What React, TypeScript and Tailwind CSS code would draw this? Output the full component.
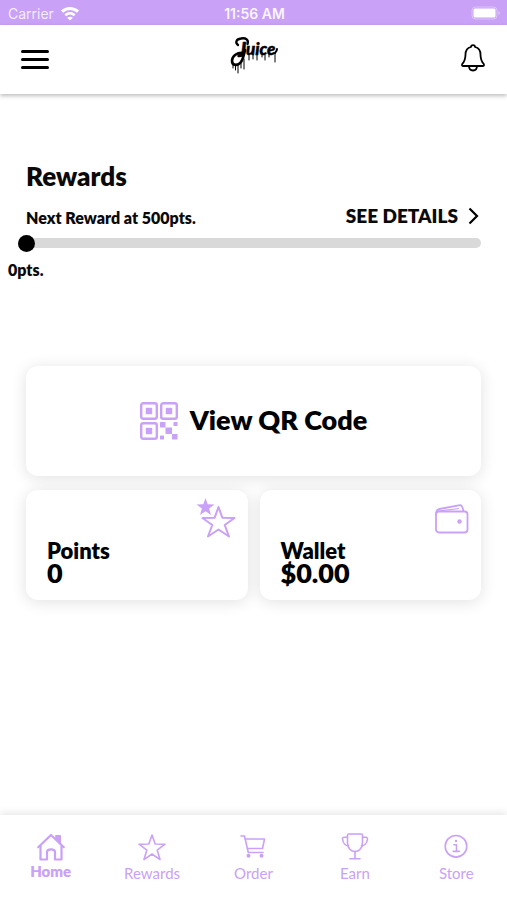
import { useState, type ReactNode } from "react";

const STAR =
  "M14 2 L17.2 11 L27 11.2 L19.2 17.1 L22 26.6 L14 21 L6 26.6 L8.8 17.1 L1 11.2 L10.8 11 Z";

function WifiIcon() {
  return (
    <svg width="20" height="16" viewBox="0 0 20 16" fill="none" stroke="white" strokeWidth="3" aria-hidden="true">
      <path d="M2 5.6 C6.500 1.300 13.500 1.300 18 5.600" />
      <path d="M5.300 9.300 C8 6.700 12 6.700 14.700 9.300" strokeWidth="2.600" />
      <path d="M10 14.500 L7.200 11.800 C8.800 10.300 11.200 10.300 12.800 11.800 Z" fill="white" stroke="none" />
    </svg>
  );
}

function BatteryIcon() {
  return (
    <svg width="30" height="16" viewBox="0 0 30 16" aria-hidden="true">
      <rect x="1" y="2" width="25" height="12" rx="3.500" fill="none" stroke="white" strokeOpacity="0.4" />
      <rect x="2.500" y="3.500" width="22" height="9" rx="1.500" fill="white" />
      <path d="M27.500 6 C29.300 7 29.300 9 27.500 10 Z" fill="white" fillOpacity="0.5" />
    </svg>
  );
}

function JuiceLogo() {
  return (
    <svg width="50" height="42" viewBox="0 0 50 42" role="img" aria-label="Juice" stroke="black" strokeLinecap="round" fill="none">
      <g fill="black" strokeWidth="0.5" fontStyle="italic" fontWeight="900" fontFamily="Lato, sans-serif">
        <text x="9" y="22" fontSize="20">J</text>
        <text x="17" y="20" fontSize="17">uice</text>
      </g>
      <path d="M9 10 C6 8 7 4 12 3.500 C17 2.500 20 5 18.500 9" strokeWidth="2.300" />
      <path d="M15 18 C8 17 3 21 3 26 C3 31 9 31 12 27 C14 24 15 20 16 15" strokeWidth="2.600" />
      <path d="M46 18 C47 17 48 16 48 14" strokeWidth="2" />
      <path d="M4 28 V33 M6.500 30 V35 M9 30 V38 M12 28 V33 M15 24 V34 M20 20 V25 M24 20 V24 M28 20 V25 M33 20 V22 M36 20 V25 M40 19 V22 M46 18 V27" strokeWidth="1" />
    </svg>
  );
}

function BellIcon() {
  return (
    <svg width="26" height="30" viewBox="0 0 26 30" fill="none" stroke="black" strokeWidth="1.800" strokeLinejoin="round" aria-hidden="true">
      <path d="M11 4 C11 1.400 15 1.400 15 4 C19 5 20.500 8 20.500 11.500 C20.500 16.500 21.500 18.500 23.800 21 Q24.500 23 23 23 H3 Q1.500 23 2.200 21 C4.500 18.500 5.500 16.500 5.500 11.500 C5.500 8 7 5 11 4 Z" />
      <path d="M9 23 C9 29 17 29 17 23" />
    </svg>
  );
}

function QrIcon() {
  return (
    <svg width="38" height="38" viewBox="0 0 38 38" fill="#c9a1f7" aria-hidden="true">
      <g fill="none" stroke="#c9a1f7" strokeWidth="2.400">
        <rect x="1.200" y="1.200" width="15.600" height="15.600" rx="2" />
        <rect x="21.200" y="1.200" width="15.600" height="15.600" rx="2" />
        <rect x="1.200" y="21.200" width="15.600" height="15.600" rx="2" />
      </g>
      <rect x="5.800" y="5.800" width="6.400" height="6.400" />
      <rect x="25.800" y="5.800" width="6.400" height="6.400" />
      <rect x="5.800" y="25.800" width="6.400" height="6.400" />
      <rect x="20" y="20" width="5.500" height="5.500" rx="0.500" />
      <rect x="25.500" y="25.500" width="6.500" height="6.500" rx="0.500" />
      <rect x="32" y="32" width="5.500" height="5.500" rx="0.500" />
      <rect x="33.500" y="20" width="4" height="4" rx="0.500" />
      <rect x="20" y="33.500" width="4" height="4" rx="0.500" />
    </svg>
  );
}

function PointsIcon() {
  return (
    <svg width="40" height="42" viewBox="0 0 40 42" fill="none" stroke="#c9a1f7" strokeWidth="2" strokeLinejoin="round" aria-hidden="true">
      <path d="M22.500 9 L26.300 19.700 L38.500 20 L28.700 27 L33 38.500 L22.500 31.500 L12 38.500 L16.300 27 L6.500 20 L18.700 19.700 Z" />
      <path d="M9.500 0 L11.700 6.300 L18.500 6.500 L13.100 10.500 L15 17 L9.500 13.300 L4 17 L5.900 10.500 L0.500 6.500 L7.300 6.300 Z" fill="#c9a1f7" stroke="none" />
    </svg>
  );
}

function WalletIcon() {
  return (
    <svg width="34" height="30" viewBox="0 0 34 30" fill="none" stroke="#c9a1f7" strokeWidth="1.800" strokeLinejoin="round" aria-hidden="true">
      <rect x="1" y="7.500" width="31.500" height="21" rx="3" />
      <path d="M1 10.500 C1 7 2 5.500 4.500 5 L25 1.200 C27.500 1.200 28 4.500 28.500 7.500" />
      <path d="M3.500 7.200 L24 4.500" strokeWidth="1.200" />
      <circle cx="24.500" cy="17.500" r="2.200" fill="#c9a1f7" stroke="none" />
    </svg>
  );
}

function NavIcon({ children }: { children: ReactNode }) {
  return (
    <svg width="28" height="28" viewBox="0 0 28 28" className="overflow-visible" fill="none" stroke="currentColor" strokeWidth="1.600" strokeLinejoin="round" strokeLinecap="round" aria-hidden="true">
      {children}
    </svg>
  );
}

const tabs: { label: string; icon: ReactNode }[] = [
  {
    label: "Home",
    icon: (
      <g strokeWidth="2.200">
        <path d="M1.200 14.200 L14 2 L26.800 14.200" />
        <path d="M3.500 13 V26.500 H10 V19 C10 15.500 18 15.500 18 19 V26.500 H24.500 V13" />
        <path d="M19 2.500 H23.500 V11 L19 6.500 Z" fill="currentColor" strokeWidth="1" />
      </g>
    ),
  },
  { label: "Rewards", icon: <path d={STAR} /> },
  {
    label: "Order",
    icon: (
      <g>
        <path d="M2 3 H5.500 L9.300 19.500 H24" />
        <path d="M6.300 6 H25.500 L23.500 15.500 H8.500" />
        <circle cx="9.500" cy="22.800" r="1.200" fill="currentColor" />
        <circle cx="22.500" cy="22.800" r="1.200" fill="currentColor" />
      </g>
    ),
  },
  {
    label: "Earn",
    icon: (
      <g>
        <path d="M7.500 1 H20.500 Q21.500 1 21.500 2.200 V9.500 C21.500 21.500 6.500 21.500 6.500 9.500 V2.200 Q6.500 1 7.500 1 Z" />
        <path d="M6.500 4.200 H3 Q1.500 4.200 1.500 6 C2 10 4.500 12.700 7.500 12.700 M21.500 4.200 H25 Q26.500 4.200 26.500 6 C26 10 23.500 12.700 20.500 12.700" />
        <path d="M14 18.500 V25.500 M9 25.700 H19" />
      </g>
    ),
  },
  {
    label: "Store",
    icon: (
      <g>
        <circle cx="14" cy="13.300" r="10.800" />
        <circle cx="14" cy="8" r="1.200" fill="currentColor" stroke="none" />
        <path d="M11.800 11.700 H14.500 V18.200 M11.300 18.400 H17.300" />
      </g>
    ),
  },
];

export default function App() {
  const [active, setActive] = useState("Home");
  const [points, setPoints] = useState(0);

  return (
    <div className="flex min-h-screen flex-col bg-white font-['Lato',sans-serif] text-[#0a0a0a]">
      <div className="grid h-[25px] grid-cols-3 items-center bg-[#c9a1f7] pr-1.5 pl-2 font-['Inter',sans-serif] text-[14px] text-white">
        <div className="flex items-center gap-1.5 pt-0.5">
          <span className="opacity-80">Carrier</span>
          <WifiIcon />
        </div>
        <span className="pt-0.5 text-center font-semibold opacity-90">11:56 AM</span>
        <div className="flex justify-end">
          <BatteryIcon />
        </div>
      </div>

      <header className="grid h-[69px] grid-cols-3 items-center px-[21px] shadow-[0_2px_4px_rgba(0,0,0,0.25)]">
        <button type="button" aria-label="Menu" className="flex w-7 flex-col gap-[5px]">
          <span className="h-[3px] w-full rounded-sm bg-black" />
          <span className="h-[3px] w-full rounded-sm bg-black" />
          <span className="h-[3px] w-full rounded-sm bg-black" />
        </button>
        <div className="flex justify-center pb-2">
          <JuiceLogo />
        </div>
        <button type="button" aria-label="Notifications" className="justify-self-end pb-1">
          <BellIcon />
        </button>
      </header>

      <main className="flex flex-1 flex-col px-[26px] pt-[66px]">
        <section>
          <h1 className="text-[26px] leading-8 font-extrabold">Rewards</h1>
          <div className="mt-1.5 flex h-10 items-center justify-between">
            <label htmlFor="progress" className="text-[16px] leading-5 font-extrabold">
              Next Reward at 500pts.
            </label>
            <a href="#details" className="flex items-center gap-2.5 pr-0.5 pb-1 text-[19px] leading-6 font-extrabold">
              SEE DETAILS
              <svg width="11" height="18" viewBox="0 0 11 18" fill="none" stroke="black" strokeWidth="2.200" aria-hidden="true">
                <path d="M1.500 1.500 L9 9 L1.500 16.500" />
              </svg>
            </a>
          </div>
          <input
            id="progress"
            type="range"
            min={0}
            max={500}
            value={points}
            onChange={(e) => setPoints(Number(e.target.value))}
            className="block h-2.5 w-full appearance-none rounded-full bg-[#d9d9d9] [&::-webkit-slider-thumb]:-ml-2 [&::-webkit-slider-thumb]:size-[17px] [&::-webkit-slider-thumb]:appearance-none [&::-webkit-slider-thumb]:rounded-full [&::-webkit-slider-thumb]:bg-black"
          />
          <p className="mt-3 -ml-[18px] text-[16px] leading-5 font-extrabold">{points}pts.</p>
        </section>

        <section className="mt-[86px] grid grid-cols-2 gap-x-3 gap-y-3.5">
          <button
            type="button"
            className="col-span-2 flex h-[110px] items-center justify-center gap-3 rounded-xl bg-white text-[27px] font-extrabold text-black shadow-[0_2px_16px_rgba(0,0,0,0.12)]"
          >
            <QrIcon />
            <span className="pb-0.5">View QR Code</span>
          </button>
          <button
            type="button"
            className="flex h-[110px] justify-between rounded-xl bg-white pt-2 pr-3 pb-4 pl-[21px] text-left text-black shadow-[0_2px_16px_rgba(0,0,0,0.12)]"
          >
            <span className="flex flex-col self-end font-extrabold">
              <span className="text-[22px] leading-[22px]">Points</span>
              <span className="text-[27px] leading-[22px]">0</span>
            </span>
            <PointsIcon />
          </button>
          <button
            type="button"
            className="flex h-[110px] justify-between rounded-xl bg-white pt-3.5 pr-3 pb-4 pl-[21px] text-left text-black shadow-[0_2px_16px_rgba(0,0,0,0.12)]"
          >
            <span className="flex flex-col self-end font-extrabold">
              <span className="text-[22px] leading-[22px]">Wallet</span>
              <span className="text-[27px] leading-[22px]">$0.00</span>
            </span>
            <WalletIcon />
          </button>
        </section>
      </main>

      <nav className="grid h-[85px] grid-cols-5 bg-white pt-[18px] shadow-[0_-2px_8px_rgba(0,0,0,0.1)]">
        {tabs.map((tab) => (
          <button
            key={tab.label}
            type="button"
            onClick={() => setActive(tab.label)}
            aria-current={active === tab.label ? "page" : undefined}
            className={
              active === tab.label
                ? "flex flex-col items-center text-[15px] leading-5 font-extrabold text-[#c9a1f7]"
                : "flex flex-col items-center gap-0.5 text-[15px] leading-5 text-[#c9a1f7]"
            }
          >
            <NavIcon>{tab.icon}</NavIcon>
            {tab.label}
          </button>
        ))}
      </nav>
    </div>
  );
}
